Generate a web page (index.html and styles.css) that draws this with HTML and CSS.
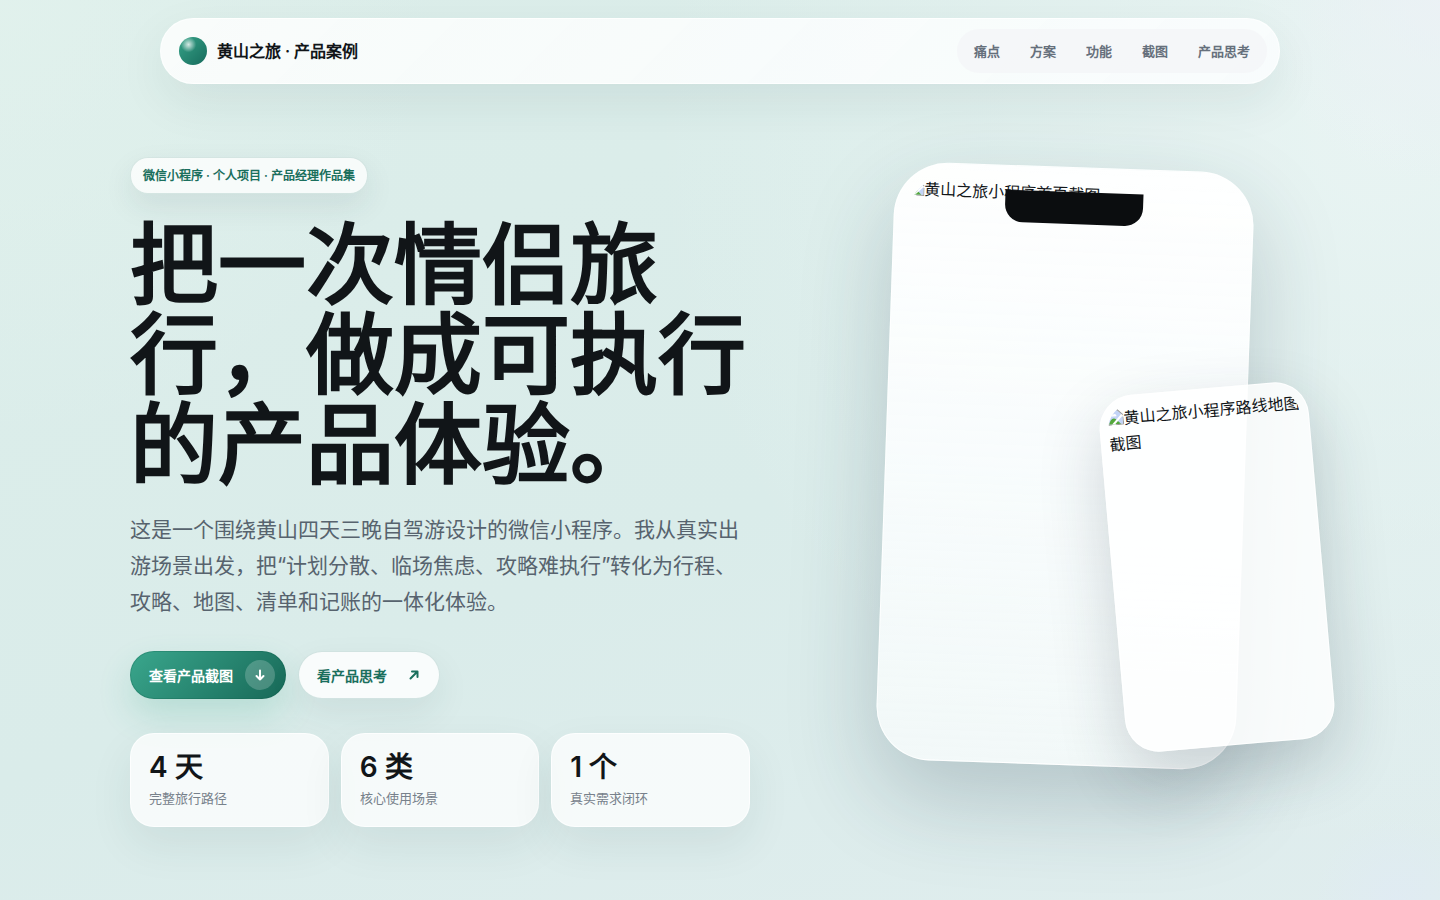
FILE: index.html
```html
<!DOCTYPE html>
<html lang="zh-CN">
<head>
<meta charset="utf-8">
<meta name="viewport" content="width=device-width, initial-scale=1">
<title>黄山之旅 · 产品案例</title>
<link rel="stylesheet" href="styles.css">
</head>
<body>
<header class="topbar">
  <a class="brand" href="#top"><span class="orb"></span>黄山之旅 · 产品案例</a>
  <nav class="links">
    <a href="#pain">痛点</a>
    <a href="#plan">方案</a>
    <a href="#features">功能</a>
    <a href="#shots">截图</a>
    <a href="#thinking">产品思考</a>
  </nav>
</header>
<main class="hero" id="top">
  <section class="copy">
    <p class="eyebrow">微信小程序 · 个人项目 · 产品经理作品集</p>
    <h1>把一次情侣旅行，做成可执行的产品体验。</h1>
    <p class="lead">这是一个围绕黄山四天三晚自驾游设计的微信小程序。我从真实出游场景出发，把“计划分散、临场焦虑、攻略难执行”转化为行程、攻略、地图、清单和记账的一体化体验。</p>
    <div class="actions">
      <a class="button primary" href="#shots">查看产品截图
        <span class="dot"><svg viewBox="0 0 16 16" width="16" height="16" aria-hidden="true"><path d="M8 3.500v9M4.500 9 8 12.500 11.500 9"/></svg></span>
      </a>
      <a class="button secondary" href="#thinking">看产品思考
        <span class="dot"><svg viewBox="0 0 16 16" width="16" height="16" aria-hidden="true"><path d="M4.500 11.500 11.500 4.500M6 4.500h5.500V10"/></svg></span>
      </a>
    </div>
    <div class="stats">
      <div class="stat"><strong>4 天</strong><span>完整旅行路径</span></div>
      <div class="stat"><strong>6 类</strong><span>核心使用场景</span></div>
      <div class="stat"><strong>1 个</strong><span>真实需求闭环</span></div>
    </div>
  </section>
  <section class="stage">
    <div class="phone">
      <div class="screen"><svg class="missing" viewBox="0 0 16 16" aria-hidden="true"><path fill="#c3d4f7" d="M1 1h9l5 5v9H1z"/><path fill="#fff" d="M3 6.500a2 2 0 0 1 3-1.500 2 2 0 0 1 3 2H3z"/><path fill="#54a83c" d="M1 15c1-4 3-6 5-6s3 2 4 3l3 3z"/><path fill="#fff" d="M15 4 4 15h3l8-8z"/><path fill="none" stroke="#9a9a9a" d="M4 15.500H.5V.5H10l5.500 5.500M8 15.500h7.500V8"/></svg>黄山之旅小程序首页截图</div>
      <div class="notch"></div>
    </div>
    <div class="mini">
      <div class="screen"><svg class="missing" viewBox="0 0 16 16" aria-hidden="true"><path fill="#c3d4f7" d="M1 1h9l5 5v9H1z"/><path fill="#fff" d="M3 6.500a2 2 0 0 1 3-1.500 2 2 0 0 1 3 2H3z"/><path fill="#54a83c" d="M1 15c1-4 3-6 5-6s3 2 4 3l3 3z"/><path fill="#fff" d="M15 4 4 15h3l8-8z"/><path fill="none" stroke="#9a9a9a" d="M4 15.500H.5V.5H10l5.500 5.500M8 15.500h7.500V8"/></svg>黄山之旅小程序路线地图截图</div>
    </div>
  </section>
</main>
</body>
</html>
```
FILE: styles.css
```css
* { box-sizing: border-box; }
body {
  margin: 0;
  min-height: 100vh;
  padding: 18px 24px 0;
  overflow-x: hidden;
  font: 16px/27px Inter, sans-serif;
  color: #111518;
  background:
    radial-gradient(circle at 100% 0, rgba(236, 241, 246, .8), transparent 11%),
    radial-gradient(circle at 0 0, rgba(228, 243, 238, .6), transparent 26%),
    radial-gradient(circle at 97% 100%, rgba(224, 234, 246, .6), transparent 5%),
    radial-gradient(circle at 96% 14%, rgba(236, 246, 245, .8), transparent 46%),
    linear-gradient(160deg, #dceeea 0%, #daecea 55%, #e0edee 100%);
}
a { color: inherit; text-decoration: none; }
h1, p { margin: 0; }

.topbar {
  display: flex;
  align-items: center;
  justify-content: space-between;
  max-width: 1120px;
  margin: 0 auto;
  padding: 10px 12px 10px 18px;
  border: 1px solid rgba(255, 255, 255, .75);
  border-radius: 33px;
  background: linear-gradient(135deg, rgba(255, 255, 255, .8), rgba(252, 254, 255, .84));
  box-shadow: 0 18px 48px rgba(30, 60, 62, .08);
}
.brand { display: flex; align-items: center; gap: 10px; font-weight: 600; }
.orb {
  width: 28px;
  height: 28px;
  border-radius: 50%;
  background:
    radial-gradient(circle at 34% 27%, rgba(255, 255, 255, .8), transparent 28%),
    linear-gradient(135deg, #36a388, #176b5c);
}
.links {
  display: flex;
  gap: 4px;
  padding: 4px;
  border-radius: 22px;
  background: rgba(244, 245, 248, .8);
  color: #66707c;
  font-size: 13px;
  font-weight: 600;
  line-height: 20px;
}
.links a { padding: 8px 13px; }

.hero {
  display: grid;
  grid-template-columns: minmax(0, 620fr) minmax(0, 490fr);
  gap: 70px;
  max-width: 1180px;
  margin: 0 auto;
  padding: 73px 0;
}
.eyebrow {
  display: inline-block;
  padding: 6px 12px;
  border: 1px solid rgba(60, 80, 90, .06);
  border-radius: 18px;
  background: rgba(255, 255, 255, .76);
  background-clip: padding-box;
  box-shadow: 0 12px 30px rgba(30, 60, 62, .09);
  color: #1a6f5d;
  font-size: 12px;
  font-weight: 600;
  line-height: 23px;
}
h1 {
  margin-top: 25px;
  font-size: 88px;
  font-weight: 600;
  line-height: 90px;
}
.lead {
  margin-top: 23px;
  color: #57636e;
  font-size: 21px;
  line-height: 36px;
}
.actions { display: flex; gap: 12px; margin-top: 31px; }
.button {
  display: flex;
  align-items: center;
  gap: 12px;
  height: 48px;
  padding: 0 10px 0 18px;
  border: 1px solid rgba(60, 80, 90, .06);
  border-radius: 24px;
  font-size: 14px;
  font-weight: 600;
}
.primary {
  border-color: rgba(10, 90, 70, .25);
  background: linear-gradient(135deg, #3aa78d, #176857);
  background-origin: border-box;
  box-shadow: 0 16px 34px rgba(40, 160, 125, .2);
  color: #fff;
}
.secondary {
  background: rgba(255, 255, 255, .84);
  background-clip: padding-box;
  box-shadow: 0 14px 34px rgba(30, 60, 62, .08);
  color: #1a6f5d;
}
.dot {
  display: grid;
  place-items: center;
  width: 30px;
  height: 30px;
  border-radius: 50%;
}
.primary .dot { background: rgba(255, 255, 255, .2); }
.dot svg {
  fill: none;
  stroke: currentColor;
  stroke-width: 2;
  stroke-linecap: round;
  stroke-linejoin: round;
}
.stats {
  display: grid;
  grid-template-columns: repeat(3, 1fr);
  gap: 12px;
  margin-top: 34px;
}
.stat {
  display: grid;
  padding: 15px 18px;
  border: 1px solid rgba(255, 255, 255, .75);
  border-radius: 24px;
  background: rgba(255, 255, 255, .74);
  box-shadow: 0 18px 44px rgba(30, 60, 62, .08);
}
.stat strong { font-size: 28px; font-weight: 600; line-height: 36px; }
.stat span { color: #77818b; font-size: 13px; line-height: 26px; }

.stage { position: relative; }
.phone, .mini {
  position: absolute;
  border: 1px solid rgba(255, 255, 255, .85);
}
.phone {
  top: 10px;
  left: 50%;
  width: 360px;
  height: 598px;
  margin-left: -180px;
  padding: 13px;
  border-radius: 54px;
  background: linear-gradient(180deg, rgba(255, 255, 255, .95), rgba(252, 254, 255, .86) 50%, rgba(250, 253, 253, .72));
  box-shadow: 0 36px 90px rgba(30, 56, 72, .22);
  transform: rotate(2deg);
}
.mini {
  top: 231px;
  right: -12px;
  width: 210px;
  height: 358px;
  padding: 8px;
  border-radius: 34px;
  background: rgba(255, 255, 255, .82);
  box-shadow: 0 26px 66px rgba(30, 46, 62, .2);
  line-height: 26px;
  transform: rotate(-5deg);
}
.screen { height: 100%; overflow: hidden; border-radius: 40px; }
.mini .screen { border-radius: 24px; }
.missing { width: 16px; height: 16px; vertical-align: -1px; }
.notch {
  position: absolute;
  top: 24px;
  left: 50%;
  width: 138px;
  height: 32px;
  margin-left: -69px;
  border-radius: 0 0 18px 18px;
  background: #0b0d0f;
}
@media (max-width: 1000px) {
  .hero { grid-template-columns: 1fr; }
  .stage { min-height: 660px; }
  h1 { font-size: 56px; line-height: 60px; }
}
```
